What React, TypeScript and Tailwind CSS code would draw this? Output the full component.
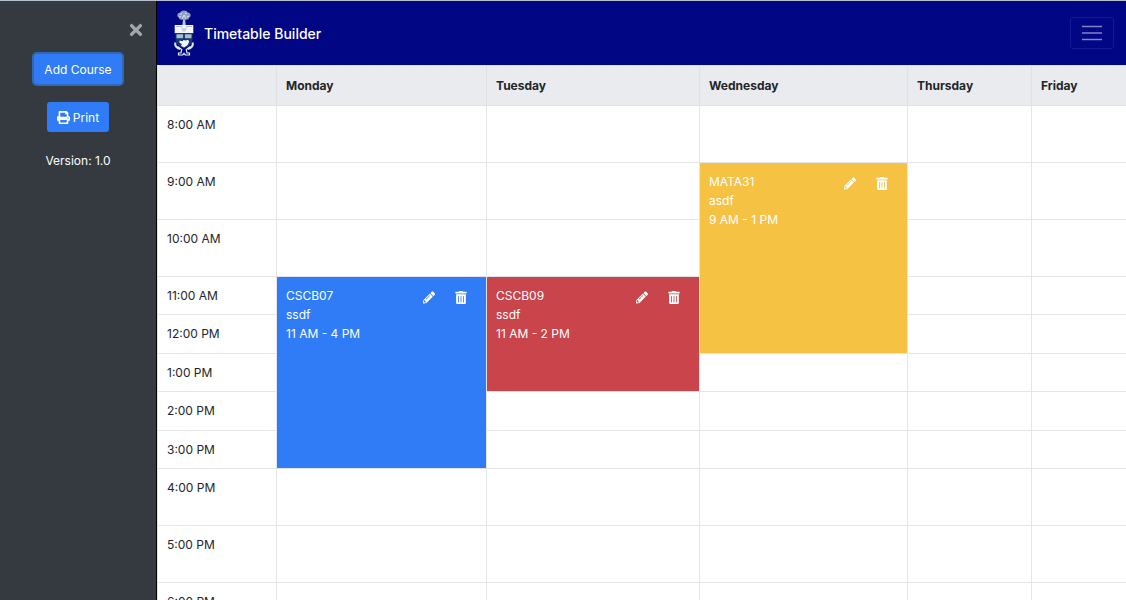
import {useState} from 'react';
import {FaPencilAlt, FaPrint, FaTimes, FaTrashAlt} from 'react-icons/fa';

type Course = {
  code: string;
  section: string;
  day: string;
  start: number;
  end: number;
  color: string;
};

const days = [
  {name: 'Monday', width: 'w-[210px]'},
  {name: 'Tuesday', width: 'w-[213px]'},
  {name: 'Wednesday', width: 'w-[208px]'},
  {name: 'Thursday', width: 'w-[124px]'},
  {name: 'Friday', width: 'w-[95px]'},
];

const hours = [8, 9, 10, 11, 12, 13, 14, 15, 16, 17, 18, 19];

const initialCourses: Course[] = [
  {code: 'CSCB07', section: 'ssdf', day: 'Monday', start: 11, end: 16, color: 'h-48 bg-[#2f7cf6]'},
  {code: 'CSCB09', section: 'ssdf', day: 'Tuesday', start: 11, end: 14, color: 'bg-[#ca444b]'},
  {code: 'MATA31', section: 'asdf', day: 'Wednesday', start: 9, end: 13, color: 'bg-[#f5c244]'},
];

const to12 = (hour: number) => (hour > 12 ? hour - 12 : hour);
const suffix = (hour: number) => (hour >= 12 ? 'PM' : 'AM');

function Crest() {
  return (
    <svg viewBox="0 0 20 46" className="h-[46px] w-5" aria-hidden="true">
      <path d="M9 10h2.2l.5 5H8.400z" fill="#b9c4dc"/>
      <path
        d="M10 .5c2 0 3.200.8 3.700 1.900 1.700.1 3 1.200 3 2.800 0 1.200-.7 2.100-1.700 2.500-.2 1.500-1.700 2.300-3.200 1.900-.9.700-2.700.7-3.600 0-1.600.3-3-.5-3.200-1.900-1-.5-1.700-1.300-1.700-2.500 0-1.600 1.300-2.700 3-2.800C6.800 1.300 8 .5 10 .5z"
        fill="#8e9fc4"
      />
      <path d="M6 4.500l2-1M11 3l2 1M5 7l2-.5M9 6l2-.5M13 7l2-1M8 9l1.500-3M12 9l-1.500-3" stroke="#dbe3f0" strokeWidth="1" fill="none"/>
      <path d="M.7 15h18.600v8.200H.7z" fill="#f4f6fa"/>
      <path d="M2 16.500h6.500M12 16.500h6" stroke="#b1bdd2" strokeWidth="1"/>
      <path d="M7 17.200l2.200.8h1.800l2-.8-1 3.800-2 1-2-1z" fill="#cdd5e3"/>
      <path d="M1.500 23.200h17v5.600c0 5-3.800 8.200-8.500 9.200-4.700-1-8.500-4.200-8.500-9.200z" fill="#15376d"/>
      <path d="M2.500 24.200h6.600v4H2.500zM10.900 24.200h6.600v4h-6.600z" fill="#a9bdce"/>
      <path d="M5.500 30.500l3 .7 1-1.200 2.200.6 2.500-.8 1 2-1.700 3.500-3.500 2.200-3-1.700.8-1.800-2.300-1.200z" fill="#f4f6fa"/>
      <path d="M1.500 32.500c-1 2.600.4 4.900 4.600 6.700M18.500 32.500c1 2.600-.4 4.900-4.600 6.700" stroke="#dfe6f1" strokeWidth="2" fill="none"/>
      <path d="M3.500 36.500l4.200 3-.7 3.500H4.500v2h4.200l1.300-1.500 1.300 1.500h4.200v-2H13l-.7-3.500 4.200-3" stroke="#e9eef6" strokeWidth="1.200" fill="none"/>
    </svg>
  );
}

function CourseBlock({course, onDelete}: {course: Course; onDelete: () => void}) {
  return (
    <div className="flex items-start justify-between text-white">
      <div>
        <p>{course.code}</p>
        <p>{course.section}</p>
        <p>{`${to12(course.start)} ${suffix(course.start)} - ${to12(course.end)} ${suffix(course.end)}`}</p>
      </div>
      <div className="flex gap-5 pt-[5px] pr-[10px]">
        <button type="button" aria-label={`Edit ${course.code}`} className="cursor-pointer">
          <FaPencilAlt className="h-[13px] w-3"/>
        </button>
        <button type="button" aria-label={`Delete ${course.code}`} onClick={onDelete} className="cursor-pointer">
          <FaTrashAlt className="h-[13px] w-3"/>
        </button>
      </div>
    </div>
  );
}

export default function App() {
  const [courses, setCourses] = useState(initialCourses);
  const [sidebarOpen, setSidebarOpen] = useState(true);

  const removeCourse = (code: string) => {
    setCourses(courses.filter((c) => c.code !== code));
  };

  const renderCell = (day: string, hour: number) => {
    const course = courses.find((c) => c.day === day && hour >= c.start && hour < c.end);
    if (!course) {
      return <td key={day} className="border border-[#e3e5e8]"/>;
    }
    if (course.start !== hour) {
      return null;
    }
    return (
      <td
        key={day}
        rowSpan={course.end - course.start}
        className={`border border-[#e3e5e8] px-[9px] pt-[9px] align-top ${course.color}`}
      >
        <CourseBlock course={course} onDelete={() => removeCourse(course.code)}/>
      </td>
    );
  };

  // hours in the middle of the day get the shorter rows
  const rowHeight = (hour: number) => (hour >= 11 && hour < 16 ? 'h-[38px]' : 'h-[57px]');

  return (
    <div className="flex h-screen overflow-hidden border-t border-[#b4c0cc] bg-white font-[Inter,sans-serif] text-[12px] leading-[19px] text-[#212529]">
      {sidebarOpen && (
        <aside className="flex w-[157px] shrink-0 flex-col items-center border-r border-black bg-[#343a40] pt-5 text-white">
          <button
            type="button"
            aria-label="Close sidebar"
            onClick={() => setSidebarOpen(false)}
            className="mr-[11px] cursor-pointer self-end text-[#a4a7ab]"
          >
            <FaTimes className="h-[18px] w-[18px]"/>
          </button>
          <button type="button" className="mt-[15px] h-[30px] cursor-pointer rounded-[3px] bg-[#2f7cf6] px-[10px] ring-2 ring-[#3069b8]">
            Add Course
          </button>
          <button type="button" className="mt-[18px] flex h-[30px] cursor-pointer items-center gap-[3px] rounded-[3px] bg-[#2f7cf6] px-[10px]">
            <FaPrint className="h-[13px] w-[13px]"/>
            Print
          </button>
          <p className="mt-[19px]">Version: 1.0</p>
        </aside>
      )}
      <div className="min-w-0 flex-1">
        <nav className="flex h-16 items-center justify-between bg-[#000684] pr-3 pl-[17px]">
          <a href="#" className="flex items-center gap-[10px] text-[14px] font-medium text-white">
            <Crest/>
            Timetable Builder
          </a>
          <button
            type="button"
            aria-label="Toggle navigation"
            onClick={() => setSidebarOpen(!sidebarOpen)}
            className="flex h-8 w-11 cursor-pointer items-center justify-center rounded-[3px] border border-[#101d93]"
          >
            <svg viewBox="0 0 20 16" className="h-4 w-5" stroke="#8084c8" strokeWidth="1.500">
              <path d="M0 1.500h20M0 8h20M0 14.500h20"/>
            </svg>
          </button>
        </nav>
        <table className="w-full table-fixed border-collapse">
          <colgroup>
            <col className="w-[119px]"/>
            {days.map((day) => (
              <col key={day.name} className={day.width}/>
            ))}
          </colgroup>
          <thead>
            <tr className="h-10 bg-[#e9ebef] text-left">
              <th className="border border-[#dee1e5]"/>
              {days.map((day) => (
                <th key={day.name} scope="col" className="border border-[#dee1e5] px-[9px] font-bold">
                  {day.name}
                </th>
              ))}
            </tr>
          </thead>
          <tbody>
            {hours.map((hour) => (
              <tr key={hour} className={rowHeight(hour)}>
                <th scope="row" className="border border-[#e3e5e8] px-[9px] pt-[9px] text-left align-top font-normal">
                  {`${to12(hour)}:00 ${suffix(hour)}`}
                </th>
                {days.map((day) => renderCell(day.name, hour))}
              </tr>
            ))}
          </tbody>
        </table>
      </div>
    </div>
  );
}
